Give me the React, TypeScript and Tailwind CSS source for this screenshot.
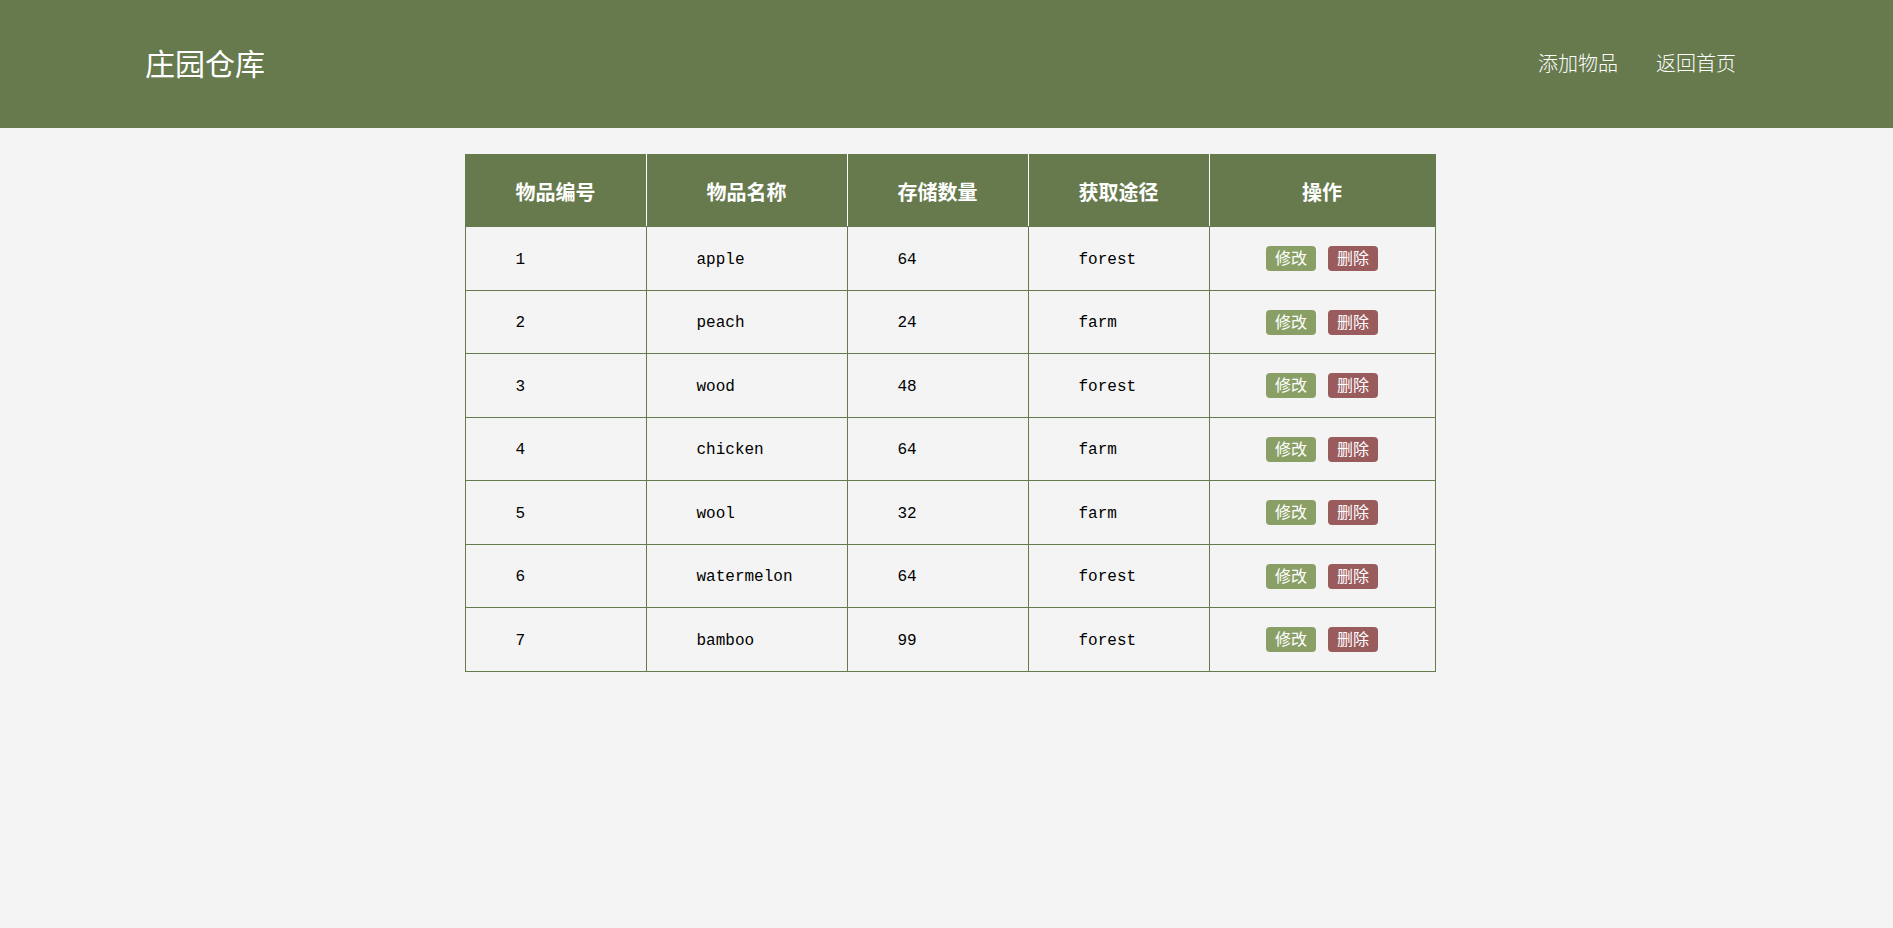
import React from 'react';

interface Item {
  id: number;
  name: string;
  count: number;
  source: string;
}

const items: Item[] = [
  { id: 1, name: 'apple', count: 64, source: 'forest' },
  { id: 2, name: 'peach', count: 24, source: 'farm' },
  { id: 3, name: 'wood', count: 48, source: 'forest' },
  { id: 4, name: 'chicken', count: 64, source: 'farm' },
  { id: 5, name: 'wool', count: 32, source: 'farm' },
  { id: 6, name: 'watermelon', count: 64, source: 'forest' },
  { id: 7, name: 'bamboo', count: 99, source: 'forest' },
];

const cjk = "font-['Inter','Noto_Sans_CJK_SC',sans-serif]";

export default function App() {
  return (
    <div className="min-h-[928px] bg-[#f4f4f4]">
      {/* top bar */}
      <header className={`flex h-[128px] items-center justify-between bg-[#677a4d] pl-[145px] pr-[157px] text-white ${cjk}`}>
        <h1 className="text-[30px] leading-none">庄园仓库</h1>
        <nav className="flex gap-[38px] text-[20px] font-light">
          <a href="#">添加物品</a>
          <a href="#">返回首页</a>
        </nav>
      </header>

      <div className="flex justify-center pl-[7px] pt-[26px]">
        <table className="w-[970px] table-fixed border-collapse">
          <colgroup>
            <col className="w-[181px]" />
            <col className="w-[201px]" />
            <col className="w-[181px]" />
            <col className="w-[181px]" />
            <col className="w-[226px]" />
          </colgroup>
          <thead>
            <tr className={`h-[72px] bg-[#677a4d] text-[20px] font-bold text-white ${cjk}`}>
              {['物品编号', '物品名称', '存储数量', '获取途径', '操作'].map((h) => (
                <th key={h} className="border border-[#677a4d] border-x-white pt-[4px] first:border-l-[#677a4d] last:border-r-[#677a4d]">
                  {h}
                </th>
              ))}
            </tr>
          </thead>
          <tbody className="font-['Liberation_Mono',monospace] text-[16px] text-black">
            {items.map((item) => (
              <tr key={item.id} className="h-[63.5px]">
                <td className="border border-[#677a4d] pl-[50px] pt-[3px]">{item.id}</td>
                <td className="border border-[#677a4d] pl-[50px] pt-[3px]">{item.name}</td>
                <td className="border border-[#677a4d] pl-[50px] pt-[3px]">{item.count}</td>
                <td className="border border-[#677a4d] pl-[50px] pt-[3px]">{item.source}</td>
                <td className="border border-[#677a4d] pt-[1px]">
                  <div className={`flex justify-center gap-[12px] text-[16px] text-white ${cjk}`}>
                    <button className="h-[25px] w-[50px] rounded-[4px] bg-[#8a9f66] leading-[25px]">修改</button>
                    <button className="h-[25px] w-[50px] rounded-[4px] bg-[#9a5b5c] leading-[25px]">删除</button>
                  </div>
                </td>
              </tr>
            ))}
          </tbody>
        </table>
      </div>
    </div>
  );
}
